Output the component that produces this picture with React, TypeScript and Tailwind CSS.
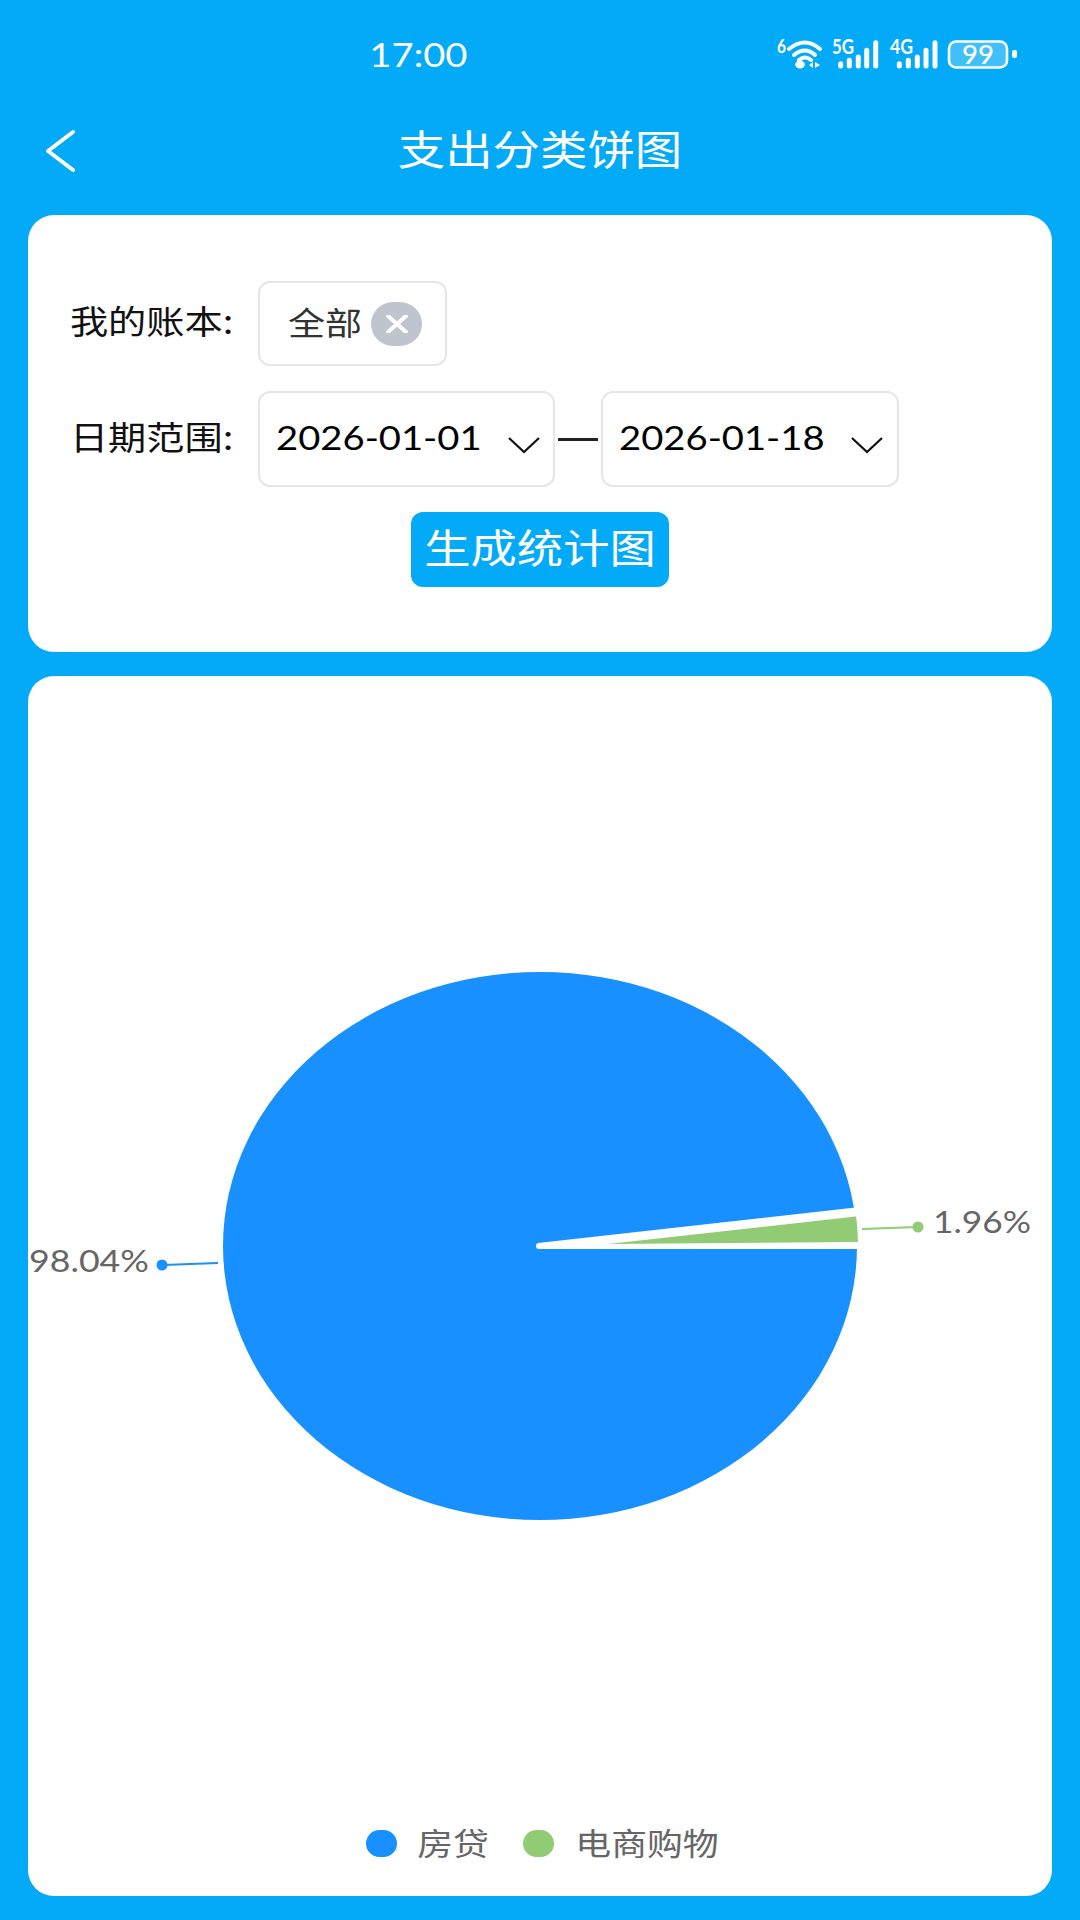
import { ReactNode } from 'react';

const cjk = "font-['Noto_Sans_CJK_SC','Noto_Sans',sans-serif]";
const lato = "font-['Lato','Noto_Sans_CJK_SC',sans-serif]";

// the screenshot is stretched sideways, text gets the same stretch
const Wide = ({ children, className }: { children: ReactNode; className?: string }) => (
  <span className={`inline-flex justify-center whitespace-nowrap ${className ?? ''}`}>
    <span className="inline-block scale-x-[1.157]">{children}</span>
  </span>
);

const Chevron = () => (
  <svg width="32" height="18" viewBox="0 0 32 18" className="mt-[12px] shrink-0">
    <path d="M1 2 L16 16 L31 2" fill="none" stroke="#111" strokeWidth="2.2" />
  </svg>
);

const Bars = ({ xs }: { xs: number[] }) => {
  const tops = [61.7, 58.3, 55, 48.3, 40.7];
  return (
    <g stroke="#fff" strokeWidth="5" strokeLinecap="round">
      {xs.map((x, i) => (
        <line key={x} x1={x} x2={x} y1={tops[i] + 2} y2="66" />
      ))}
    </g>
  );
};

const StatusIcons = () => (
  <svg width="250" height="60" viewBox="770 24 250 60" className="shrink-0">
    <text x="777" y="53" fill="#fff" fontSize="18" fontWeight="700" fontFamily="Lato" textLength="9" lengthAdjust="spacingAndGlyphs">6</text>
    <g fill="none" stroke="#fff" strokeWidth="4" strokeLinecap="round">
      <path d="M789 49 Q805 36 820 49" />
      <path d="M794 55 Q805 46 815 55" />
      <path d="M799 60 Q805 55 811 60" />
    </g>
    <ellipse cx="800" cy="64.5" rx="4.8" ry="4" fill="#fff" />
    <path d="M809 65 L813 62 L813 68 Z M815 62 L820 65 L815 68 Z" fill="#fff" />
    <text x="832" y="54" fill="#fff" fontSize="20" fontWeight="700" fontFamily="Lato" textLength="22" lengthAdjust="spacingAndGlyphs">5G</text>
    <Bars xs={[840.7, 849.3, 858.3, 866.7, 875.7]} />
    <text x="890" y="54" fill="#fff" fontSize="20" fontWeight="700" fontFamily="Lato" textLength="23" lengthAdjust="spacingAndGlyphs">4G</text>
    <Bars xs={[899.3, 908.3, 917.3, 926, 935]} />
    <rect x="949" y="41.5" width="58" height="26" rx="7" fill="#fff" fillOpacity="0.25" stroke="#fff" strokeWidth="2.6" />
    <text x="962" y="64" fill="#fff" fontSize="27" fontWeight="500" fontFamily="Lato" textLength="32" lengthAdjust="spacingAndGlyphs">99</text>
    <rect x="1012" y="50" width="5" height="8" rx="2" fill="#fff" />
  </svg>
);

const PieChart = () => (
  <svg viewBox="28 676 1024 1130" className="w-full h-[1130px] block">
    <defs>
      <clipPath id="pie-clip">
        <ellipse cx="540" cy="1246" rx="318" ry="274" />
      </clipPath>
    </defs>
    <ellipse cx="540" cy="1246" rx="317" ry="274" fill="#1890ff" />
    <polygon points="538,1243 860,1207 860,1249 538,1249" fill="#fff" />
    <circle cx="539" cy="1246" r="3" fill="#fff" />
    <polygon points="608,1244 870,1215 870,1242" fill="#91cb74" clipPath="url(#pie-clip)" />

    <line x1="862" y1="1229" x2="917" y2="1227" stroke="#91cb74" strokeWidth="2" />
    <circle cx="918" cy="1227" r="5.5" fill="#91cb74" />
    <text x="933" y="1233" fill="#666" fontSize="31" fontFamily="Lato" textLength="98" lengthAdjust="spacingAndGlyphs">1.96%</text>

    <line x1="218" y1="1263" x2="163" y2="1265" stroke="#1890ff" strokeWidth="2" />
    <circle cx="162" cy="1265" r="5.5" fill="#1890ff" />
    <text x="29" y="1272" fill="#666" fontSize="31" fontFamily="Lato" textLength="120" lengthAdjust="spacingAndGlyphs">98.04%</text>
  </svg>
);

export default function App() {
  return (
    <div className={`flex flex-col w-[1080px] h-[1920px] bg-[#02aaf8] ${cjk}`}>
      <div className="flex items-center justify-between h-[108px] pl-[372px] pr-[60px] shrink-0">
        <Wide className={`w-[93px] pt-[2px] text-[33px] text-white ${lato}`}>17:00</Wide>
        <StatusIcons />
      </div>

      <div className="grid grid-cols-[1fr_auto_1fr] items-center h-[86px] mb-[21px] shrink-0">
        <div className="pl-[45px]">
          <svg width="32" height="46" viewBox="0 0 32 46" className="block">
            <path d="M28 4 L3 23 L28 42" fill="none" stroke="#fff" strokeWidth="4" strokeLinecap="round" strokeLinejoin="round" />
          </svg>
        </div>
        <Wide className="w-[282px] pb-[8px] text-[41px] leading-none text-white">支出分类饼图</Wide>
        <div />
      </div>

      <div className="flex flex-col mx-[28px] h-[437px] pt-[66px] pl-[44px] bg-white rounded-[26px] shrink-0">
        <div className="flex items-center h-[85px]">
          <Wide className="w-[160px] mr-[26px] pb-[5px] text-[33px] text-[#111]">我的账本:</Wide>
          <div className="flex items-center w-[189px] h-[85px] pl-[28px] border-2 border-[#e6e6e6] rounded-[12px]">
            <Wide className="w-[74px] pb-[5px] text-[32px] text-[#333]">全部</Wide>
            <div className="flex items-center justify-center w-[51px] h-[44px] ml-[9px] rounded-full bg-[#c0c4cf]">
              <svg width="22" height="18" viewBox="0 0 22 18">
                <path d="M2 1 L20 17 M20 1 L2 17" stroke="#fff" strokeWidth="4" strokeLinecap="round" />
              </svg>
            </div>
          </div>
        </div>

        <div className="flex items-center h-[96px] mt-[25px]">
          <Wide className="w-[160px] mr-[26px] pb-[5px] text-[33px] text-[#111]">日期范围:</Wide>
          <div className="flex items-center justify-between w-[297px] h-[96px] pl-[16px] pr-[13px] border-2 border-[#e6e6e6] rounded-[12px]">
            <Wide className={`w-[205px] pb-[2px] text-[33px] text-black ${lato}`}>2026-01-01</Wide>
            <Chevron />
          </div>
          <div className="flex justify-center w-[46px]">
            <div className="w-[40px] h-[3px] bg-[#222]" />
          </div>
          <div className="flex items-center justify-between w-[298px] h-[96px] pl-[16px] pr-[14px] border-2 border-[#e6e6e6] rounded-[12px]">
            <Wide className={`w-[206px] pb-[2px] text-[33px] text-black ${lato}`}>2026-01-18</Wide>
            <Chevron />
          </div>
        </div>

        <div className="flex items-center justify-center self-center w-[258px] h-[75px] mt-[25px] -ml-[44px] bg-[#02aaf8] rounded-[12px]">
          <Wide className="pb-[8px] text-[40px] leading-none text-white">生成统计图</Wide>
        </div>
      </div>

      <div className="flex flex-col flex-1 mx-[28px] mt-[24px] mb-[24px] bg-white rounded-[26px] overflow-hidden">
        <PieChart />
        <div className="flex items-center justify-center h-[74px] pl-[2px] text-[31px] text-[#666]">
          <div className="w-[31px] h-[27px] rounded-full bg-[#1890ff]" />
          <Wide className="w-[69px] ml-[21px] pb-[2px]">房贷</Wide>
          <div className="w-[31px] h-[27px] ml-[36px] rounded-full bg-[#91cb74]" />
          <Wide className="w-[139px] ml-[23px] pb-[2px]">电商购物</Wide>
        </div>
      </div>
    </div>
  );
}
